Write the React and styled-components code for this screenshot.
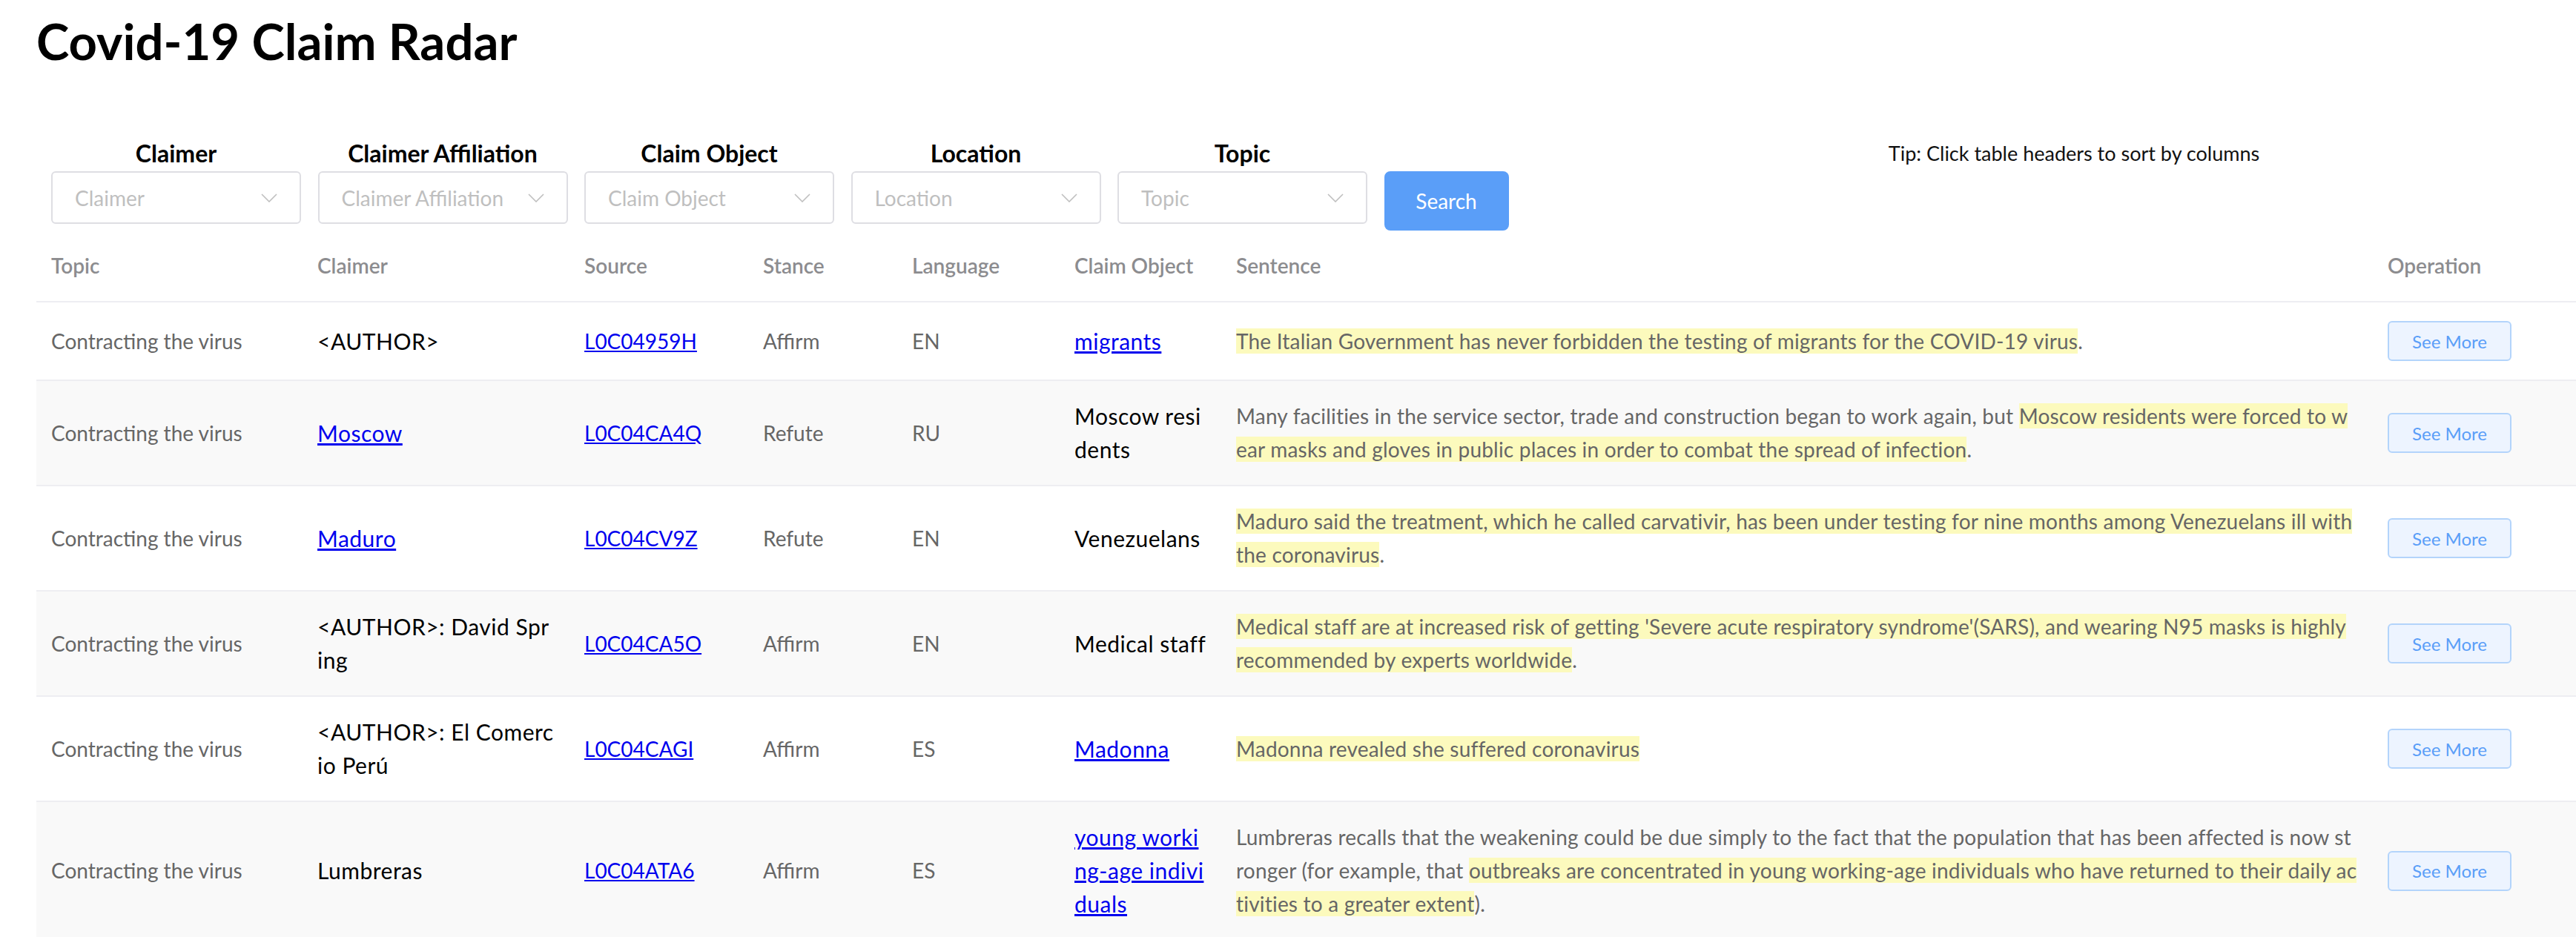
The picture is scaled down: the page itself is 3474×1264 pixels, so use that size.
import React from "react";
import styled, { createGlobalStyle } from "styled-components";

const GlobalStyle = createGlobalStyle`
  body {
    margin: 0;
    background: #fff;
    font-family: Lato, "Open Sans", sans-serif;
  }
`;

const filters = [
  "Claimer",
  "Claimer Affiliation",
  "Claim Object",
  "Location",
  "Topic",
];

const columns = [
  { title: "Topic", width: 359 },
  { title: "Claimer", width: 360 },
  { title: "Source", width: 241 },
  { title: "Stance", width: 201 },
  { title: "Language", width: 219 },
  { title: "Claim Object", width: 218 },
  { title: "Sentence", width: 1553 },
  { title: "Operation", width: 274 },
];

const rows = [
  {
    claimer: "<AUTHOR>",
    source: "L0C04959H",
    stance: "Affirm",
    lang: "EN",
    object: "migrants",
    objectLink: true,
    sentence: [
      ["The Italian Government has never forbidden the testing of migrants for the COVID-19 virus", true],
      [".", false],
    ],
  },
  {
    claimer: "Moscow",
    claimerLink: true,
    source: "L0C04CA4Q",
    stance: "Refute",
    lang: "RU",
    object: "Moscow residents",
    sentence: [
      ["Many facilities in the service sector, trade and construction began to work again, but ", false],
      ["Moscow residents were forced to wear masks and gloves in public places in order to combat the spread of infection", true],
      [".", false],
    ],
  },
  {
    claimer: "Maduro",
    claimerLink: true,
    source: "L0C04CV9Z",
    stance: "Refute",
    lang: "EN",
    object: "Venezuelans",
    sentence: [
      ["Maduro said the treatment, which he called carvativir, has been under testing for nine months among Venezuelans ill with the coronavirus", true],
      [".", false],
    ],
  },
  {
    claimer: "<AUTHOR>: David Spring",
    source: "L0C04CA5O",
    stance: "Affirm",
    lang: "EN",
    object: "Medical staff",
    sentence: [
      ["Medical staff are at increased risk of getting 'Severe acute respiratory syndrome'(SARS), and wearing N95 masks is highly recommended by experts worldwide", true],
      [".", false],
    ],
  },
  {
    claimer: "<AUTHOR>: El Comercio Perú",
    source: "L0C04CAGI",
    stance: "Affirm",
    lang: "ES",
    object: "Madonna",
    objectLink: true,
    sentence: [["Madonna revealed she suffered coronavirus", true]],
  },
  {
    claimer: "Lumbreras",
    source: "L0C04ATA6",
    stance: "Affirm",
    lang: "ES",
    object: "young working-age individuals",
    objectLink: true,
    sentence: [
      ["Lumbreras recalls that the weakening could be due simply to the fact that the population that has been affected is now stronger (for example, that ", false],
      ["outbreaks are concentrated in young working-age individuals who have returned to their daily activities to a greater extent", true],
      [").", false],
    ],
  },
];

function Chevron() {
  return (
    <svg width="22" height="12" viewBox="0 0 22 12" fill="none">
      <polyline points="1,1 11,11 21,1" stroke="#bfbfbf" strokeWidth="1.6" />
    </svg>
  );
}

export default function App() {
  return (
    <Page>
      <GlobalStyle />
      <Title>Covid-19 Claim Radar</Title>
      <FilterBar>
        {filters.map((f) => (
          <FilterGroup key={f}>
            <FilterLabel>{f}</FilterLabel>
            <SelectBox>
              <span>{f}</span>
              <Chevron />
            </SelectBox>
          </FilterGroup>
        ))}
        <SearchButton>Search</SearchButton>
        <Tip>Tip: Click table headers to sort by columns</Tip>
      </FilterBar>
      <Table>
        <colgroup>
          {columns.map((c) => (
            <col key={c.title} style={{ width: c.width }} />
          ))}
        </colgroup>
        <thead>
          <tr>
            {columns.map((c) => (
              <Th key={c.title}>{c.title}</Th>
            ))}
          </tr>
        </thead>
        <tbody>
          {rows.map((r, i) => (
            <Row key={r.source} $striped={i % 2 === 1}>
              <Td $tone="muted">Contracting the virus</Td>
              <Td $tone="dark">
                {r.claimerLink ? <Link href="#">{r.claimer}</Link> : r.claimer}
              </Td>
              <Td>
                <Link href="#">{r.source}</Link>
              </Td>
              <Td $tone="muted">{r.stance}</Td>
              <Td $tone="muted">{r.lang}</Td>
              <Td $tone="dark">
                {r.objectLink ? <Link href="#">{r.object}</Link> : r.object}
              </Td>
              <SentenceCell>
                {r.sentence.map(([text, hl], k) =>
                  hl ? <Highlight key={k}>{text}</Highlight> : <span key={k}>{text}</span>
                )}
              </SentenceCell>
              <Td>
                <MoreButton>See More</MoreButton>
              </Td>
            </Row>
          ))}
        </tbody>
      </Table>
    </Page>
  );
}

const Page = styled.div`
  padding-left: 49px;
  overflow: hidden;
`;

const Title = styled.h1`
  margin: 15px 0 0;
  font-size: 67px;
  line-height: 1.2;
  font-weight: 700;
  color: #000;
`;

const FilterBar = styled.div`
  display: flex;
  align-items: flex-start;
  gap: 22.5px;
  margin-top: 95px;
  padding-left: 20px;
`;

const FilterGroup = styled.div`
  display: flex;
  flex-direction: column;
  align-items: center;
  gap: 7px;
  width: 337px;
`;

const FilterLabel = styled.div`
  font-size: 32px;
  line-height: 34px;
  font-weight: 700;
  color: #000;
`;

const SelectBox = styled.div`
  box-sizing: border-box;
  width: 100%;
  height: 71px;
  display: flex;
  align-items: center;
  justify-content: space-between;
  padding: 0 30px 0 30px;
  border: 2px solid #dedee3;
  border-radius: 6px;
  background: #fff;
  font-size: 28px;
  color: #bfbfbf;
`;

const SearchButton = styled.button`
  margin-top: 41px;
  width: 168px;
  height: 80px;
  border: none;
  border-radius: 8px;
  background: #5a9ef8;
  color: #fff;
  font-family: inherit;
  font-size: 28px;
`;

const Tip = styled.div`
  flex: 1;
  margin-left: 63px;
  text-align: center;
  font-size: 27px;
  line-height: 34px;
  color: #111;
`;

const Table = styled.table`
  width: 100%;
  table-layout: fixed;
  border-collapse: collapse;
  font-size: 28px;
  line-height: 45px;
`;

const Th = styled.th`
  padding: 25px 20px;
  text-align: left;
  font-weight: 600;
  color: #8c8c8f;
  border-bottom: 2px solid #eeeef2;
`;

const Row = styled.tr`
  background: ${(p) => (p.$striped ? "#f9f9f9" : "#fff")};
  border-bottom: 2px solid #eeeef2;
`;

const Td = styled.td`
  padding: 25px 20px;
  vertical-align: middle;
  white-space: nowrap;
  color: ${(p) => (p.$tone === "muted" ? "#666" : "#000")};

  ${(p) =>
    p.$tone === "dark" &&
    `
    font-size: 30px;
    letter-spacing: 0.5px;
    white-space: normal;
    word-break: break-all;
  `}
`;

const SentenceCell = styled.td`
  padding: 25px 20px;
  vertical-align: middle;
  color: #666;
  letter-spacing: 0.2px;
  word-break: break-all;
`;

const Link = styled.a`
  color: #0000ee;
  text-decoration: underline;
`;

const Highlight = styled.mark`
  background: #fcfabd;
  color: inherit;
`;

const MoreButton = styled.button`
  display: block;
  width: 167px;
  height: 54px;
  border: 2px solid #b3d4fb;
  border-radius: 6px;
  background: #edf4ff;
  color: #5a9ef8;
  font-family: inherit;
  font-size: 24px;
  letter-spacing: 0;
`;
